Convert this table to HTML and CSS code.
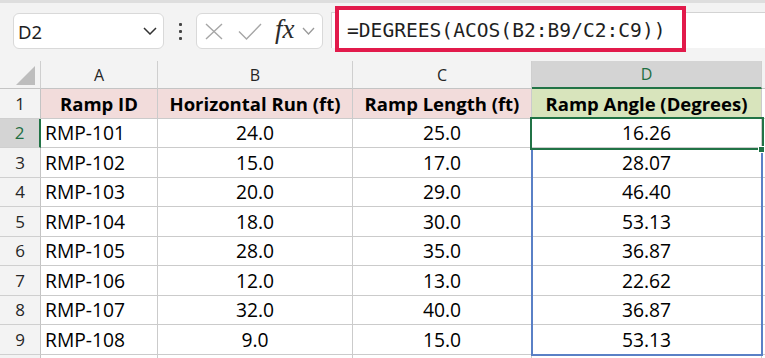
FILE: index.html
```html
<!DOCTYPE html>
<html>
<head>
<meta charset="utf-8">
<link rel="stylesheet" href="styles.css">
</head>
<body>
<div class="toolbar">
  <div class="namebox">
    <span class="nb-text">D2</span>
    <svg class="nb-chev" width="14" height="8" viewBox="0 0 14 8"><path d="M1 1 L7 7 L13 1" fill="none" stroke="#333" stroke-width="1.5"/></svg>
  </div>
  <div class="dots"><i></i><i></i><i></i></div>
  <div class="fbtns">
    <svg class="ic-x" width="18" height="17" viewBox="0 0 18 17"><path d="M1 1 L17 16 M17 1 L1 16" fill="none" stroke="#a6a6a6" stroke-width="1.4"/></svg>
    <svg class="ic-check" width="24" height="17" viewBox="0 0 24 17"><path d="M1 8.5 L8.5 16 L23 1" fill="none" stroke="#a6a6a6" stroke-width="1.4"/></svg>
    <span class="fx">fx</span>
    <svg class="ic-chev" width="13" height="8" viewBox="0 0 13 8"><path d="M1 1 L6.5 7 L12 1" fill="none" stroke="#9a9a9a" stroke-width="1.3"/></svg>
  </div>
  <div class="finput">
    <div class="formula">=DEGREES(ACOS(B2:B9/C2:C9))</div>
  </div>
</div>
<div class="sheet">
  <div class="grid">
    <div class="ch corner"><svg width="19" height="19" viewBox="0 0 19 19"><polygon points="19,0 19,19 0,19" fill="#bdbdbd"/></svg></div>
    <div class="ch">A</div>
    <div class="ch">B</div>
    <div class="ch">C</div>
    <div class="ch sel">D</div>
    <div class="ch end"></div>

    <div class="rh">1</div>
    <div class="c h pink">Ramp ID</div>
    <div class="c h pink">Horizontal Run (ft)</div>
    <div class="c h pink">Ramp Length (ft)</div>
    <div class="c h green">Ramp Angle (Degrees)</div>
    <div class="c end"></div>

    <div class="rh sel">2</div>
    <div class="c l">RMP-101</div><div class="c">24.0</div><div class="c">25.0</div><div class="c">16.26</div><div class="c end"></div>
    <div class="rh">3</div>
    <div class="c l">RMP-102</div><div class="c">15.0</div><div class="c">17.0</div><div class="c">28.07</div><div class="c end"></div>
    <div class="rh">4</div>
    <div class="c l">RMP-103</div><div class="c">20.0</div><div class="c">29.0</div><div class="c">46.40</div><div class="c end"></div>
    <div class="rh">5</div>
    <div class="c l">RMP-104</div><div class="c">18.0</div><div class="c">30.0</div><div class="c">53.13</div><div class="c end"></div>
    <div class="rh">6</div>
    <div class="c l">RMP-105</div><div class="c">28.0</div><div class="c">35.0</div><div class="c">36.87</div><div class="c end"></div>
    <div class="rh">7</div>
    <div class="c l">RMP-106</div><div class="c">12.0</div><div class="c">13.0</div><div class="c">22.62</div><div class="c end"></div>
    <div class="rh">8</div>
    <div class="c l">RMP-107</div><div class="c">32.0</div><div class="c">40.0</div><div class="c">36.87</div><div class="c end"></div>
    <div class="rh">9</div>
    <div class="c l">RMP-108</div><div class="c">9.0</div><div class="c">15.0</div><div class="c">53.13</div><div class="c end"></div>
    <div class="rh"></div>
    <div class="c"></div><div class="c"></div><div class="c"></div><div class="c"></div><div class="c end"></div>
  </div>
  <div class="range"></div>
  <div class="active"></div>
  <div class="handle"></div>
</div>
</body>
</html>
```

FILE: styles.css
```css
* { box-sizing: border-box; }
html, body { margin: 0; padding: 0; }
body {
  width: 765px;
  height: 358px;
  overflow: hidden;
  background: #f3f3f3;
  font-family: "Open Sans", "Noto Sans", sans-serif;
}

.toolbar {
  height: 61px;
  border-top: 3px solid #dedede;
  display: flex;
  align-items: flex-start;
  padding-top: 10px;
  background: #f3f3f3;
}

.namebox {
  margin-left: 13px;
  width: 151px;
  height: 36px;
  background: #fff;
  border: 1px solid #d9d9d9;
  border-radius: 6px;
  display: flex;
  align-items: center;
  justify-content: space-between;
  padding: 0 6px 0 4px;
}
.nb-text {
  font-family: "Noto Sans", sans-serif;
  font-size: 18.5px;
  color: #1f1f1f;
}

.dots {
  width: 32px;
  height: 36px;
  display: flex;
  flex-direction: column;
  align-items: center;
  justify-content: center;
  gap: 4px;
}
.dots i {
  display: block;
  width: 3px;
  height: 3px;
  border-radius: 1px;
  background: #454545;
}

.fbtns {
  width: 127px;
  height: 36px;
  background: #fff;
  border: 1px solid #d9d9d9;
  border-radius: 6px;
  display: flex;
  align-items: center;
  padding-left: 8px;
}
.ic-check { margin-left: 15px; }
.fx {
  margin-left: 13px;
  font-family: "Liberation Serif", serif;
  font-style: italic;
  font-size: 27px;
  color: #2b2b2b;
  line-height: 1;
  margin-top: -3px;
}
.ic-chev { margin-left: 7px; }

.finput {
  margin-left: 8px;
  margin-top: -1px;
  flex: 1;
  height: 36px;
  background: #fff;
  border-top: 1px solid #d3d3d3;
  border-left: 1px solid #d3d3d3;
  position: relative;
}
.formula {
  position: absolute;
  left: 3px;
  top: -7px;
  width: 351px;
  height: 46px;
  border: 4px solid #e21a4b;
  background: #fff;
  display: flex;
  align-items: center;
  padding: 3px 0 0 8px;
  font-family: "DejaVu Sans Mono", monospace;
  font-size: 19.6px;
  color: #1f1f1f;
  white-space: nowrap;
}

.sheet {
  position: relative;
  height: 297px;
  background: #fff;
}
.grid {
  display: grid;
  grid-template-columns: 41px 117px 195px 179px 230px 3px;
  grid-template-rows: 28px repeat(9, 29.5px) 20px;
}
.ch {
  background: #f3f3f3;
  border-right: 1px solid #cfcfcf;
  border-bottom: 1px solid #c4c4c4;
  display: flex;
  align-items: center;
  justify-content: center;
  font-size: 16px;
  color: #262626;
}
.ch.corner {
  justify-content: flex-end;
  align-items: flex-end;
  padding: 0 5px 3px 0;
}
.ch.sel {
  background: #d4d4d4;
  color: #1e6e42;
  border-bottom: 2px solid #217346;
}
.ch.end { border-right: none; background: #f3f3f3; }

.rh {
  background: #f3f3f3;
  border-right: 1px solid #c4c4c4;
  border-bottom: 1px solid #cfcfcf;
  display: flex;
  align-items: center;
  justify-content: center;
  font-size: 17px;
  color: #262626;
}
.rh.sel {
  background: #d4d4d4;
  color: #1e6e42;
  border-right: 2px solid #217346;
}

.c {
  background: #fff;
  border-right: 1px solid #cbcbcb;
  border-bottom: 1px solid #cbcbcb;
  display: flex;
  align-items: center;
  justify-content: center;
  font-size: 19.3px;
  color: #000;
  white-space: nowrap;
}
.c.l { justify-content: flex-start; padding-left: 4px; }
.c.h { font-weight: bold; font-size: 18.5px; }
.c.pink { background: #f2dcdb; }
.c.green { background: #d8e4bc; }
.c.end { border-right: none; }

.range {
  position: absolute;
  left: 531px;
  top: 88px;
  width: 232px;
  height: 207px;
  border: 2px solid #5a80c6;
  border-top: none;
}
.active {
  position: absolute;
  left: 530px;
  top: 56px;
  width: 234px;
  height: 33px;
  border: 2px solid #217346;
}
.handle {
  position: absolute;
  left: 758px;
  top: 85px;
  width: 7px;
  height: 7px;
  background: #217346;
  border: 1px solid #fff;
}
```
